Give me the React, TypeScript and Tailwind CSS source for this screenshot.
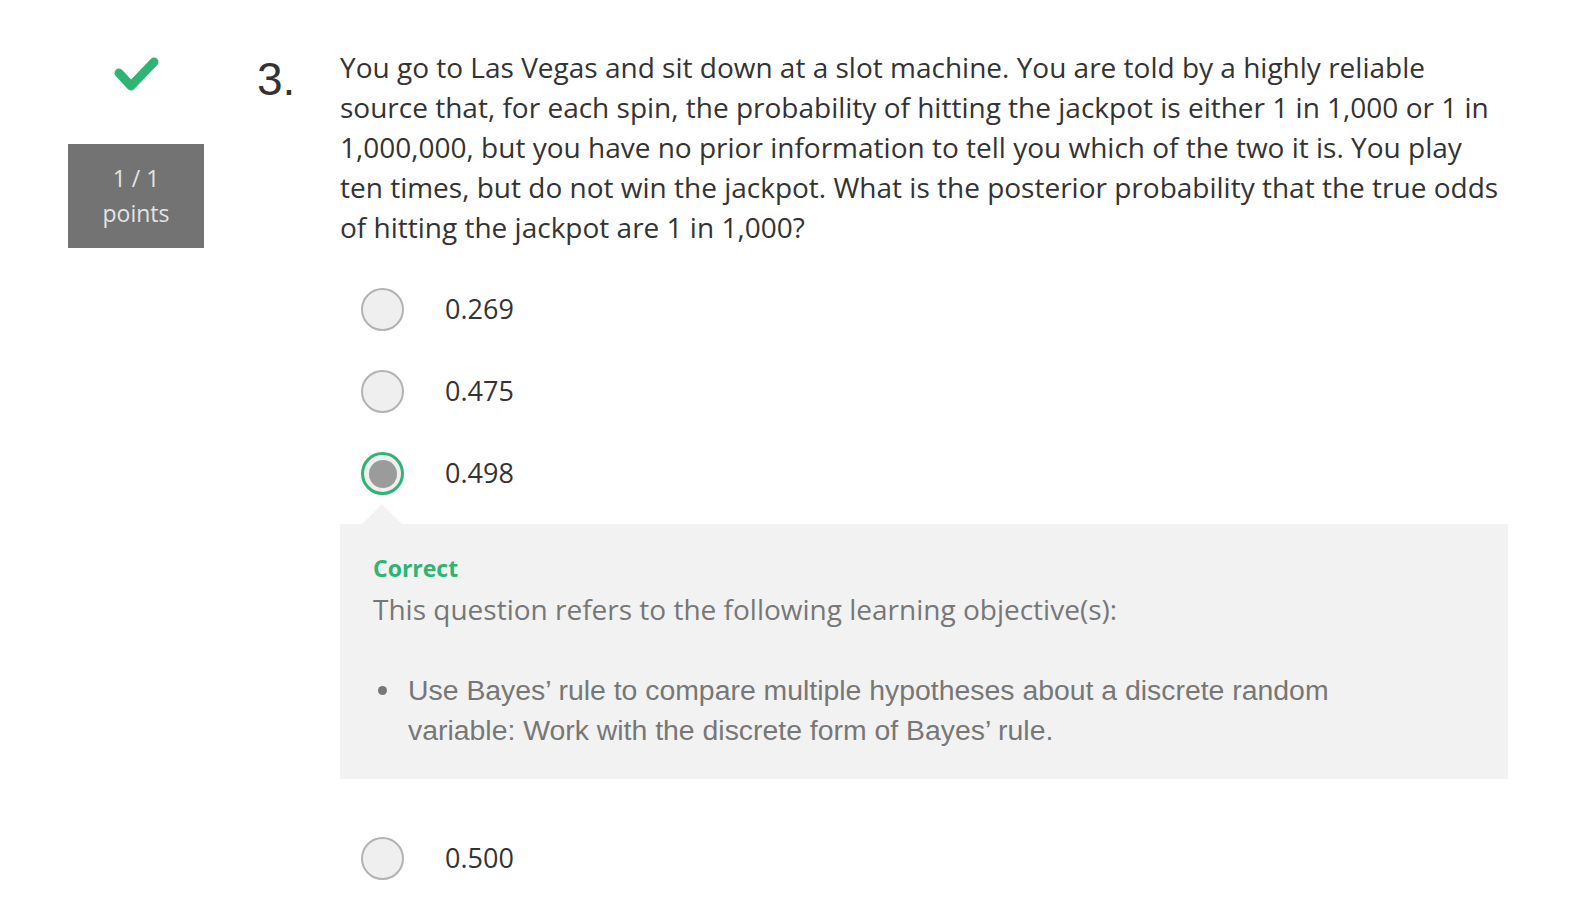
const options = [
  { value: '0.269', selected: false },
  { value: '0.475', selected: false },
  { value: '0.498', selected: true },
];

const questionLines = [
  'You go to Las Vegas and sit down at a slot machine. You are told by a highly reliable',
  'source that, for each spin, the probability of hitting the jackpot is either 1 in 1,000 or 1 in',
  '1,000,000, but you have no prior information to tell you which of the two it is. You play',
  'ten times, but do not win the jackpot. What is the posterior probability that the true odds',
  'of hitting the jackpot are 1 in 1,000?',
];

function Radio({ selected }: { selected: boolean }) {
  if (selected) {
    return (
      <span className="flex h-[43px] w-[43px] shrink-0 items-center justify-center rounded-full border-[3px] border-[#2fb474] bg-[#efefef]">
        <span className="h-[28px] w-[28px] rounded-full bg-[#9b9b9b]" />
      </span>
    );
  }
  return <span className="h-[43px] w-[43px] shrink-0 rounded-full border-2 border-[#b3b3b3] bg-[#efefef]" />;
}

function Option({ value, selected }: { value: string; selected: boolean }) {
  return (
    <label className="ml-[21px] flex h-[43px] items-center">
      <Radio selected={selected} />
      <span className="ml-[41px] text-[27px] text-[#333]">{value}</span>
    </label>
  );
}

export default function App() {
  return (
    <div className="min-h-screen bg-white font-['Open_Sans',sans-serif]">
      <div className="flex items-start pt-[47px]">
        <div className="ml-[68px] flex w-[136px] flex-col items-center pt-[8px]">
          <svg width="48" height="40" viewBox="0 0 48 40" className="mr-[1px]">
            <polyline points="7,18 19,31 42,7" fill="none" stroke="#2fb474" strokeWidth="9" strokeLinecap="round" strokeLinejoin="round" />
          </svg>
          <div className="mt-[49px] flex h-[104px] w-[136px] flex-col items-center justify-center bg-[#737373] text-[23px] leading-[35px] text-[#e3e3e3]">
            <span>1 / 1</span>
            <span>points</span>
          </div>
        </div>

        <div className="ml-[53px] mt-[9px] w-[83px] font-['Liberation_Sans',Arial,sans-serif] text-[46px] leading-[46px] text-[#333]">
          3.
        </div>

        <div className="w-[1168px]">
          <p className="text-[28px] leading-[40px] text-[#333]">
            {questionLines.map((line, i) => (
              <span key={i} className="block whitespace-nowrap">{line}</span>
            ))}
          </p>

          <div className="mt-[41px] flex flex-col gap-[39px]">
            {options.map(o => (
              <Option key={o.value} value={o.value} selected={o.selected} />
            ))}
          </div>

          <div className="relative mt-[29px] bg-[#f2f2f2] px-[33px] pb-[29px] pt-[28px]">
            <div className="absolute left-[28px] top-[-14px] h-[28px] w-[28px] rotate-45 bg-[#f2f2f2]" />
            <div className="relative text-[23px] font-bold leading-[32px] text-[#2fb474]">Correct</div>
            <p className="mt-[5px] text-[28px] leading-[40px] text-[#777]">
              This question refers to the following learning objective(s):
            </p>
            <ul className="mt-[41px] font-['Liberation_Sans',Arial,sans-serif] text-[28.4px] leading-[40px] text-[#777]">
              <li className="flex items-start">
                <span className="ml-[5px] mt-[16px] h-[9px] w-[9px] shrink-0 rounded-full bg-[#777]" />
                <span className="ml-[21px] max-w-[1000px]">
                  Use Bayes’ rule to compare multiple hypotheses about a discrete random variable: Work with the discrete form of Bayes’ rule.
                </span>
              </li>
            </ul>
          </div>

          <div className="mt-[58px] pb-[40px]">
            <Option value="0.500" selected={false} />
          </div>
        </div>
      </div>
    </div>
  );
}
